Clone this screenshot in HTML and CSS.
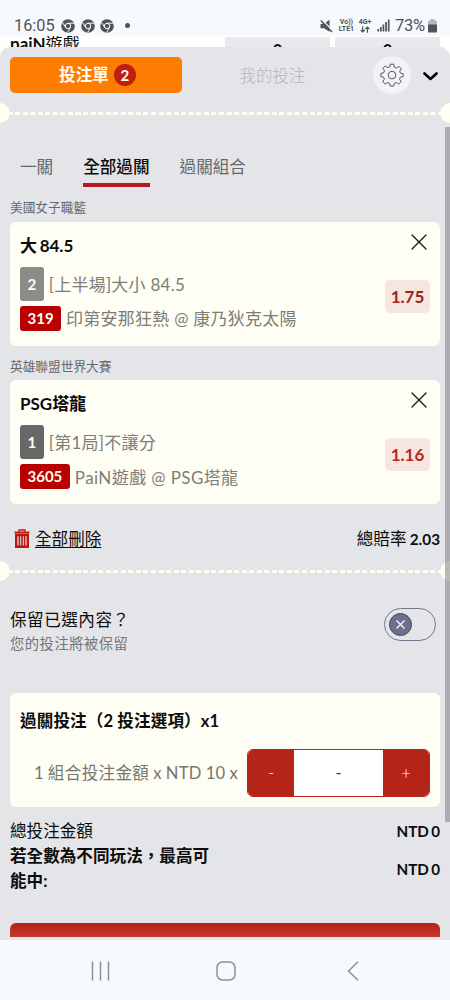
FILE: index.html
```html
<!DOCTYPE html>
<html lang="zh-Hant">
<head>
<meta charset="utf-8">
<meta name="viewport" content="width=device-width, initial-scale=1">
<title>投注單</title>
<link rel="stylesheet" href="styles.css">
</head>
<body>
<svg class="defs" width="0" height="0">
  <symbol id="chrome" viewBox="0 0 14 14">
    <circle cx="7" cy="7" r="6.8" fill="#505357"/>
    <circle cx="7" cy="7" r="2.7" fill="none" stroke="#f6f9fe" stroke-width="1"/>
    <path d="M7 4.2H13M4.6 8.4L1.5 3.3M9.4 8.4L6.6 13.5" stroke="#f6f9fe" stroke-width="1" fill="none"/>
  </symbol>
  <symbol id="close" viewBox="0 0 16 16">
    <path d="M1 1L15 15M15 1L1 15" stroke="#151510" stroke-width="1.3" stroke-linecap="round" fill="none"/>
  </symbol>
</svg>
<header class="status">
  <span class="clock">16:05</span>
  <svg class="chrome"><use href="#chrome"/></svg>
  <svg class="chrome"><use href="#chrome"/></svg>
  <svg class="chrome"><use href="#chrome"/></svg>
  <span class="dot"></span>
  <span class="grow"></span>
  <svg class="mute" width="13" height="14" viewBox="0 0 13 14"><path d="M.5 5H4L9.5 .8V12.8L4 9.2H.5Z" fill="#505357"/><path d="M2 1L13 12" stroke="#f6f9fe" stroke-width="1.3"/><path d="M.8 1.5L12 13" stroke="#505357" stroke-width="1.5"/></svg>
  <span class="net volte"><span>Vo))</span><span>LTE1</span></span>
  <span class="net fourg"><span>4G+</span><svg width="10" height="7" viewBox="0 0 10 7"><path d="M2.7 .3V6M.7 4L2.7 6L4.7 4M7.4 6.7V1M5.4 3L7.4 1L9.4 3" stroke="#505357" stroke-width="1.2" fill="none"/></svg></span>
  <svg class="signal" width="13" height="13" viewBox="0 0 13 13"><path d="M1.2 10V12.5M3.8 8V12.5M6.4 5.5V12.5M9 3V12.5M11.7 .5V12.5" stroke="#505357" stroke-width="1.7"/></svg>
  <span class="percent">73%</span>
  <svg class="battery" width="9" height="14" viewBox="0 0 9 14"><path d="M2.5 0H6.5V1.5H8Q9 1.5 9 2.5V6H0V2.5Q0 1.5 1 1.5H2.5Z" fill="#b3b6ba"/><path d="M0 5.5H9V12.5Q9 13.5 8 13.5H1Q0 13.5 0 12.5Z" fill="#505357"/></svg>
</header>
<main class="app">
  <div class="behind">
    <span class="team"><b>paiN</b>遊戲</span>
    <span class="cell">0</span><span class="cell">0</span>
  </div>
  <section class="sheet">
    <div class="top">
      <div class="slip">投注單<span class="count">2</span></div>
      <div class="mine">我的投注</div>
      <div class="gear"><svg width="24" height="24" viewBox="0 0 24 24" fill="none" stroke="#55585b" stroke-width="1" stroke-linejoin="round"><path d="M10.2 1.2H13.8L14.3 4.1L16.4 5L18.9 3.3L21.4 5.8L19.7 8.2L20.5 10.2L23.2 10.7V13.6L20.4 14.1L19.5 16.2L21.2 18.7L18.7 21L16.3 19.5L14.2 20.3L13.7 23H10.2L9.7 20.3L7.6 19.5L5.2 21.1L2.7 18.7L4.4 16.2L3.6 14.1L.9 13.6V10.3L3.6 9.8L4.5 7.7L2.9 5.3L5.3 2.9L7.8 4.6L9.8 4Z"/><circle cx="12" cy="12.1" r="3.8"/></svg></div>
      <svg class="chev" width="15" height="9" viewBox="0 0 15 9"><path d="M1.5 1.5L7.5 7L13.5 1.5" stroke="#000" stroke-width="2.6" stroke-linecap="round" stroke-linejoin="round" fill="none"/></svg>
    </div>
    <div class="tear"></div>
    <nav class="tabs"><span>一關</span><span class="active">全部過關</span><span>過關組合</span></nav>
    <div class="league">美國女子職籃</div>
    <article class="card bet">
      <div class="bet-head"><h2>大 84.5</h2><svg width="16" height="16"><use href="#close"/></svg></div>
      <div class="bet-body">
        <div class="info">
          <div class="line first"><span class="tag light">2</span><span>[上半場]大小 84.5</span></div>
          <div class="line"><span class="tag id">319</span><span>印第安那狂熱 @ 康乃狄克太陽</span></div>
        </div>
        <span class="odds dark">1.75</span>
      </div>
    </article>
    <div class="league second">英雄聯盟世界大賽</div>
    <article class="card bet">
      <div class="bet-head"><h2>PSG塔龍</h2><svg width="16" height="16"><use href="#close"/></svg></div>
      <div class="bet-body">
        <div class="info">
          <div class="line first"><span class="tag">1</span><span>[第1局]不讓分</span></div>
          <div class="line"><span class="tag id">3605</span><span class="latin">PaiN遊戲 @ PSG塔龍</span></div>
        </div>
        <span class="odds">1.16</span>
      </div>
    </article>
    <div class="summary">
      <svg width="16" height="19" viewBox="0 0 16 19" fill="none" stroke="#bd1714"><path d="M5 2.8V1H11V2.8" stroke-width="1.3"/><path d="M.5 3.5H15.5" stroke-width="2"/><path d="M2.2 6H13.8V17.8H2.2Z" stroke-width="2.4"/><path d="M5.4 7V17M8 7V17M10.6 7V17" stroke-width="1.6"/></svg>
      <u>全部刪除</u><span class="grow"></span><span class="sum">總賠率 <b>2.03</b></span>
    </div>
    <div class="tear"></div>
    <div class="keep">
      <div><div class="keep-title">保留已選內容？</div><div class="keep-sub">您的投注將被保留</div></div>
      <div class="toggle"><span class="knob"><svg width="11" height="11" viewBox="0 0 11 11"><path d="M1.5 1.5L9.5 9.5M9.5 1.5L1.5 9.5" stroke="#fff" stroke-width="1.2"/></svg></span></div>
    </div>
    <article class="card stake">
      <h2>過關投注（2 投注選項）x1</h2>
      <div class="stake-row"><span class="stake-label">1 組合投注金額 x NTD 10 x</span>
        <div class="stepper"><span class="btn">-</span><span class="value">-</span><span class="btn">+</span></div>
      </div>
    </article>
    <div class="totals">
      <div class="total"><span>總投注金額</span><b>NTD 0</b></div>
      <div class="total max"><b class="max-label">若全數為不同玩法，最高可能中:</b><b>NTD 0</b></div>
    </div>
    <div class="submit"></div>
    <div class="thumb"></div>
  </section>
</main>
<footer class="nav">
  <svg width="20" height="20" viewBox="0 0 20 20"><path d="M1.5 .5V19.5M9.5 .5V19.5M17.5 .5V19.5" stroke="#8e9195" stroke-width="1.5"/></svg>
  <svg class="home" width="20" height="20" viewBox="0 0 20 20"><rect x="1" y="1" width="18" height="18" rx="5.5" fill="none" stroke="#8e9195" stroke-width="1.5"/></svg>
  <svg width="12" height="20" viewBox="0 0 12 20"><path d="M11 .8L1.5 10L11 19.2" fill="none" stroke="#8e9195" stroke-width="1.5"/></svg>
</footer>
</body>
</html>
```
FILE: styles.css
```css
* { box-sizing: border-box; }
body {
  margin: 0;
  width: 450px;
  height: 1000px;
  overflow: hidden;
  display: flex;
  flex-direction: column;
  background: #f6f9fe;
  color: #0c0c0c;
  font: 400 16.6px/24px Lato, "Noto Sans CJK TC", sans-serif;
}
h2 { margin: 0; font-size: 16.6px; font-weight: 700; line-height: 24px; }
svg { flex: none; display: block; }
.defs { position: absolute; }
.grow { flex: 1; }

.status {
  height: 36px;
  flex: none;
  display: flex;
  align-items: center;
  padding: 15px 13px 0 14px;
  color: #505357;
  font-family: Roboto, sans-serif;
}
.clock { width: 40px; margin-right: 7px; font-size: 16.3px; }
.chrome { width: 14px; height: 14px; margin-right: 5.5px; }
.dot { width: 5px; height: 5px; margin-left: 5px; border-radius: 50%; background: #505357; }
.net { display: flex; flex-direction: column; align-items: center; font-size: 7px; line-height: 7px; font-weight: 700; }
.mute { margin-right: 5px; }
.volte { width: 17px; margin-right: 2px; }
.fourg { width: 16px; margin-right: 4px; }
.signal { margin-right: 5px; }
.percent { font-size: 16.5px; margin-right: 3px; letter-spacing: -0.2px; }

.app { height: 904px; flex: none; overflow: hidden; background: #fff; }
.behind { height: 11px; overflow: hidden; display: flex; padding: 1px 10px 0; gap: 5px; line-height: 11px; }
.team { flex: 1; line-height: 13px; font-size: 17px; }
.cell { width: 105px; height: 30px; line-height: 29px; background: #e9eaec; text-align: center; font-weight: 700; }
.sheet { position: relative; height: 893px; background: #e4e5e8; border-radius: 10px 10px 0 0; }

.top { height: 56px; display: flex; align-items: center; padding-left: 10px; }
.slip {
  width: 172px; height: 36px; padding-left: 3px;
  display: flex; align-items: center; justify-content: center; gap: 5px;
  border-radius: 5px; background: #ff7c02; color: #fffdf0; font-weight: 700;
}
.count { width: 22px; height: 22px; border-radius: 50%; background: #c01e12; text-align: center; font-size: 15px; line-height: 22px; }
.mine { width: 180px; padding: 2px 0 0 1px; text-align: center; color: #b4b6b8; font-weight: 300; }
.gear { width: 38px; height: 38px; margin-left: 11px; display: grid; place-items: center; border-radius: 50%; background: #f1f3f5; }
.chev { margin-left: 12px; margin-top: 2px; }

.tear { position: relative; height: 20px; overflow: hidden; display: flex; align-items: center; }
.tear::before {
  content: ""; width: 100%; height: 3px;
  background: repeating-linear-gradient(90deg, #fffef2 0 5px, transparent 5px 7.55px);
}
.tear::after {
  content: ""; position: absolute; inset: 0;
  background: radial-gradient(circle at 0 50%, #fffef2 9.5px, transparent 10px), radial-gradient(circle at 100% 50%, #fffef2 9.5px, transparent 10px);
}

.tabs { height: 64px; display: flex; align-items: flex-end; gap: 30px; padding-left: 20px; color: #66686b; }
.tabs span { height: 33px; padding-top: 1px; border-bottom: 4px solid transparent; }
.tabs .active { color: #0c0c0c; font-weight: 500; border-color: #b81820; }
.league { height: 34.5px; padding: 8px 10px 0; font-size: 12.7px; color: #66686b; }
.card { margin: 0 10px; border-radius: 6px; background: #fffef5; }
.bet { height: 124px; padding: 11px 10px 0; }
.bet-head { display: flex; justify-content: space-between; padding-right: 3px; }
.bet-head h2 { padding-top: 1px; line-height: 23px; font-size: 17px; word-spacing: -1.5px; }
.bet-head svg { margin-top: 1px; }
.bet-body { display: flex; justify-content: space-between; padding-top: 10px; }
.line { height: 25px; display: flex; align-items: center; gap: 5px; color: #7d7d76; font-size: 17px; letter-spacing: 0.25px; }
.line > span:last-child { padding-top: 2px; }
.line > .latin { letter-spacing: 0.4px; }
.first { height: 34px; margin-bottom: 5px; }
.tag { padding: 0 7.5px; height: 34px; line-height: 34px; border-radius: 3px; background: #686868; color: #fffef2; font-size: 15px; font-weight: 700; letter-spacing: 0; }
.light { background: #8b8b88; }
.tag.id { height: 25px; line-height: 25px; background: #b80000; }
.odds { width: 45px; height: 33px; margin-top: 13px; border-radius: 5px; background: #f7e6df; color: #bd251f; text-align: center; line-height: 33px; font-size: 17px; font-weight: 700; }
.odds.dark { color: #9d2420; }
.summary { height: 57px; display: flex; align-items: center; padding: 12px 10px 0 14px; gap: 5px; }
.summary b { font-size: 15.3px; }
.sum { word-spacing: -1px; }
.summary u { text-underline-offset: 2px; }

.keep { height: 112px; display: flex; justify-content: space-between; padding: 27px 14px 0 10px; }
.keep-title { letter-spacing: 0.5px; }
.keep-sub { font-size: 14.3px; letter-spacing: 0.5px; color: #74767a; line-height: 23px; }
.toggle { width: 52px; height: 33px; display: flex; align-items: center; padding-left: 4px; border: 1px solid #73748c; border-radius: 17px; }
.knob { width: 23px; height: 23px; display: grid; place-items: center; border: 1px solid #46485f; border-radius: 50%; background: #6d6e90; }
.stake { height: 114px; padding: 16px 10px 0; }
.stake h2 { letter-spacing: 0.1px; }
.stake-row { display: flex; align-items: center; justify-content: flex-end; gap: 9px; padding-top: 16px; color: #77776f; }
.stake-label { letter-spacing: 0.3px; word-spacing: -0.6px; }
.stepper { width: 183px; height: 48px; display: flex; overflow: hidden; border: 1px solid #b52419; border-radius: 6px; background: #fff; line-height: 46px; text-align: center; }
.btn { width: 46px; background: #b52419; color: #fff; font-weight: 300; }
.value { flex: 1; color: #444; }

.totals { padding: 11px 10px 0; }
.total { display: flex; align-items: center; justify-content: space-between; height: 25px; }
.total > b:last-child { font-size: 15.2px; word-spacing: -1.4px; }
.total.max { height: 51px; }
.max-label { width: 206px; line-height: 25px; }
.submit { height: 14px; margin: 29px 10px 0; border-radius: 6px 6px 0 0; background: linear-gradient(#b62018, #c23a30); }
.thumb { position: absolute; right: 0; top: 80px; width: 5px; height: 695px; background: rgba(112, 115, 118, 0.5); }

.nav { height: 60px; flex: none; display: flex; align-items: center; padding: 2px 91px 0; justify-content: space-between; }
.home { margin-right: 6px; }
```
